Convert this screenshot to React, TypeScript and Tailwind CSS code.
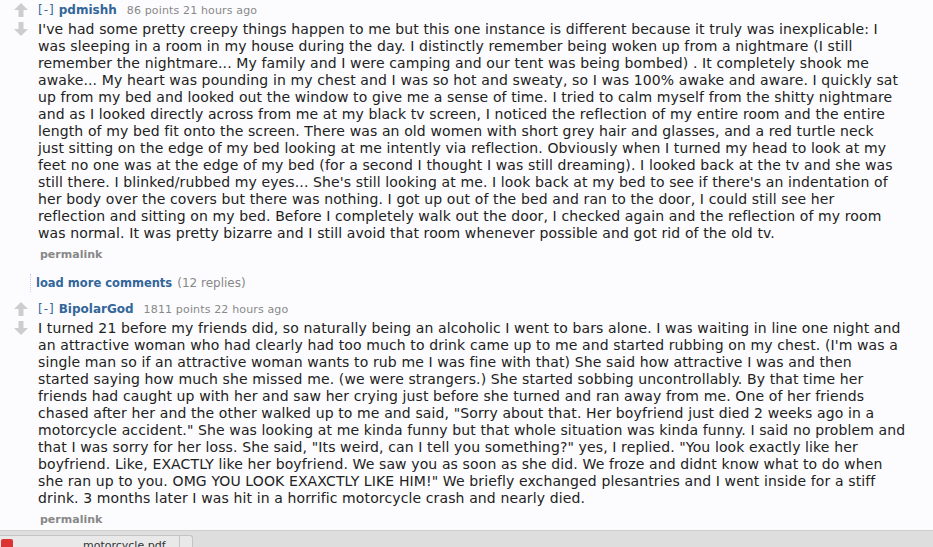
import React from "react";

const font = { fontFamily: '"DejaVu Sans", Verdana, sans-serif' };

const comment1 = [
  "I've had some pretty creepy things happen to me but this one instance is different because it truly was inexplicable: I",
  "was sleeping in a room in my house during the day. I distinctly remember being woken up from a nightmare (I still",
  "remember the nightmare... My family and I were camping and our tent was being bombed) . It completely shook me",
  "awake... My heart was pounding in my chest and I was so hot and sweaty, so I was 100% awake and aware. I quickly sat",
  "up from my bed and looked out the window to give me a sense of time. I tried to calm myself from the shitty nightmare",
  "and as I looked directly across from me at my black tv screen, I noticed the reflection of my entire room and the entire",
  "length of my bed fit onto the screen. There was an old women with short grey hair and glasses, and a red turtle neck",
  "just sitting on the edge of my bed looking at me intently via reflection. Obviously when I turned my head to look at my",
  "feet no one was at the edge of my bed (for a second I thought I was still dreaming). I looked back at the tv and she was",
  "still there. I blinked/rubbed my eyes... She's still looking at me. I look back at my bed to see if there's an indentation of",
  "her body over the covers but there was nothing. I got up out of the bed and ran to the door, I could still see her",
  "reflection and sitting on my bed. Before I completely walk out the door, I checked again and the reflection of my room",
  "was normal. It was pretty bizarre and I still avoid that room whenever possible and got rid of the old tv.",
];

const comment2 = [
  "I turned 21 before my friends did, so naturally being an alcoholic I went to bars alone. I was waiting in line one night and",
  "an attractive woman who had clearly had too much to drink came up to me and started rubbing on my chest. (I'm was a",
  "single man so if an attractive woman wants to rub me I was fine with that) She said how attractive I was and then",
  "started saying how much she missed me. (we were strangers.) She started sobbing uncontrollably. By that time her",
  "friends had caught up with her and saw her crying just before she turned and ran away from me. One of her friends",
  'chased after her and the other walked up to me and said, "Sorry about that. Her boyfriend just died 2 weeks ago in a',
  'motorcycle accident." She was looking at me kinda funny but that whole situation was kinda funny. I said no problem and',
  'that I was sorry for her loss. She said, "Its weird, can I tell you something?" yes, I replied. "You look exactly like her',
  "boyfriend. Like, EXACTLY like her boyfriend. We saw you as soon as she did. We froze and didnt know what to do when",
  'she ran up to you. OMG YOU LOOK EXAXCTLY LIKE HIM!" We briefly exchanged plesantries and I went inside for a stiff',
  "drink. 3 months later I was hit in a horrific motorcycle crash and nearly died.",
];

const Arrow = ({ down }: { down?: boolean }) => (
  <svg width="16" height="14" viewBox="0 0 16 14" className={down ? "rotate-180" : ""}>
    <path d="M8 0 L15 7 L10.5 7 L10.5 14 L5.5 14 L5.5 7 L1 7 Z" fill="#cdcdcd" />
  </svg>
);

const Comment = ({ author, points, age, lines }: { author: string; points: string; age: string; lines: string[] }) => (
  <div className="flex">
    <div className="w-[38px] flex flex-col items-center pl-[4px] pt-[2px] gap-[5px]">
      <Arrow />
      <Arrow down />
    </div>
    <div>
      <div className="flex items-baseline h-[18px]">
        <span className="text-[12px] text-[#336699] tracking-[1px]">[-]</span>
        <span className="ml-[4px] text-[12px] font-bold text-[#336699]">{author}</span>
        <span className="ml-[10px] text-[11px] tracking-[0.15px] text-[#888888]">
          {points} points {age}
        </span>
      </div>
      <div className="mt-[2px] text-[14px] tracking-[0.12px] leading-[17px] text-[#222222]">
        {lines.map((l, i) => (
          <div key={i} className="whitespace-nowrap">
            {l}
          </div>
        ))}
      </div>
      <div className="mt-[6px] ml-[2px] text-[11px] font-bold text-[#888888] leading-[14px]">permalink</div>
    </div>
  </div>
);

export default function App() {
  return (
    <div style={font} className="w-[933px] h-[547px] overflow-hidden bg-[#fcfcfe] flex flex-col">
      <div className="flex-1 pt-[1px]">
        <Comment author="pdmishh" points="86" age="21 hours ago" lines={comment1} />
        <div className="mt-[12px] ml-[30px] pl-[5px] border-l border-dotted border-[#c8c8f0] flex items-baseline h-[18px]">
          <span className="text-[11.5px] font-bold text-[#336699]">load more comments</span>
          <span className="ml-[5px] text-[12px] text-[#888888]">(12 replies)</span>
        </div>
        <div className="mt-[8px]">
          <Comment author="BipolarGod" points="1811" age="22 hours ago" lines={comment2} />
        </div>
      </div>
      <div className="h-[17px] bg-[#dedede] border-t border-[#cfcfcf] pt-[4px]">
        <div className="w-[193px] h-full bg-[#e9e9e9] border border-b-0 border-l-0 border-[#c4c4c4] rounded-tr-[3px] flex overflow-hidden">
          <div className="w-[180px] border-r border-[#c4c4c4] flex items-start">
            <div className="ml-[1px] mt-[3px] w-[12px] h-[10px] bg-[#d33] rounded-[2px]" />
            <span className="ml-[70px] mt-[4px] text-[11px] text-[#333] leading-none">motorcycle.pdf</span>
          </div>
        </div>
      </div>
    </div>
  );
}
